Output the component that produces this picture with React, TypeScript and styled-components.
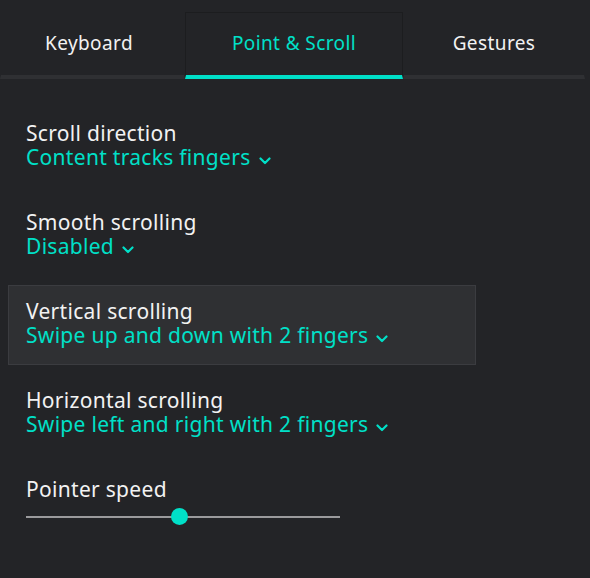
import React from "react";
import styled, { createGlobalStyle } from "styled-components";

const GlobalStyle = createGlobalStyle`
  html, body {
    margin: 0;
    padding: 0;
    background: #232427;
  }
  body {
    font-family: "Noto Sans", Lato, sans-serif;
    -webkit-font-smoothing: antialiased;
  }
`;

const Page = styled.div`
  width: 590px;
  height: 578px;
  background: #232427;
  overflow: hidden;
`;

const TabBar = styled.div`
  display: flex;
  padding-top: 12px;
  width: 585px;
`;

const Tab = styled.div<{ active?: boolean; width: number; shift?: number }>`
  width: ${(p) => p.width}px;
  height: 67px;
  box-sizing: border-box;
  display: flex;
  align-items: center;
  justify-content: center;
  font-size: 19px;
  letter-spacing: 0.4px;
  padding: 0 ${(p) => p.shift || 0}px 2px 0;
  color: ${(p) => (p.active ? "#00e0c8" : "#f2f2f2")};
  border: 1px solid ${(p) => (p.active ? "#1c1d1f" : "transparent")};
  border-bottom: 4px solid ${(p) => (p.active ? "#00e0c8" : "#2f3033")};
`;

const Content = styled.div`
  display: flex;
  flex-direction: column;
  gap: 9px;
  padding: 28px 0 0 8px;
`;

const Item = styled.div<{ selected?: boolean }>`
  width: 468px;
  box-sizing: border-box;
  padding: 13px 17px 17px;
  background: ${(p) => (p.selected ? "#2f3033" : "transparent")};
  border: 1px solid ${(p) => (p.selected ? "#3b3c40" : "transparent")};
`;

const Label = styled.div`
  color: #f2f2f2;
  font-size: 21px;
  letter-spacing: 0.3px;
  line-height: 24px;
`;

const Value = styled.div`
  display: flex;
  align-items: center;
  gap: 8px;
  color: #00e0c8;
  font-size: 21px;
  letter-spacing: 0.3px;
  line-height: 24px;
`;

const Slider = styled.div`
  position: relative;
  width: 314px;
  height: 2px;
  background: #9a9a9c;
  margin-top: 15px;
`;

const Knob = styled.div`
  position: absolute;
  top: -8px;
  width: 17px;
  height: 17px;
  margin-left: -8px;
  border-radius: 50%;
  background: #00e0c8;
`;

const Chevron = () => (
  <svg width="12" height="8" viewBox="0 0 12 8" style={{ marginTop: 8 }}>
    <path
      d="M1.5 1.5 L6 6 L10.5 1.5"
      fill="none"
      stroke="#00e0c8"
      strokeWidth="2.2"
      strokeLinecap="round"
      strokeLinejoin="round"
    />
  </svg>
);

const settings = [
  { label: "Scroll direction", value: "Content tracks fingers" },
  { label: "Smooth scrolling", value: "Disabled" },
  { label: "Vertical scrolling", value: "Swipe up and down with 2 fingers", selected: true },
  { label: "Horizontal scrolling", value: "Swipe left and right with 2 fingers" },
];

const App = () => {
  const speed = 0.488;
  return (
    <Page>
      <GlobalStyle />
      <TabBar>
        <Tab width={185} shift={7}>
          Keyboard
        </Tab>
        <Tab width={218} active>
          Point &amp; Scroll
        </Tab>
        <Tab width={182}>Gestures</Tab>
      </TabBar>
      <Content>
        {settings.map((s) => (
          <Item key={s.label} selected={s.selected}>
            <Label>{s.label}</Label>
            <Value>
              {s.value}
              <Chevron />
            </Value>
          </Item>
        ))}
        <Item>
          <Label>Pointer speed</Label>
          <Slider>
            <Knob style={{ left: `${speed * 100}%` }} />
          </Slider>
        </Item>
      </Content>
    </Page>
  );
};

export default App;
